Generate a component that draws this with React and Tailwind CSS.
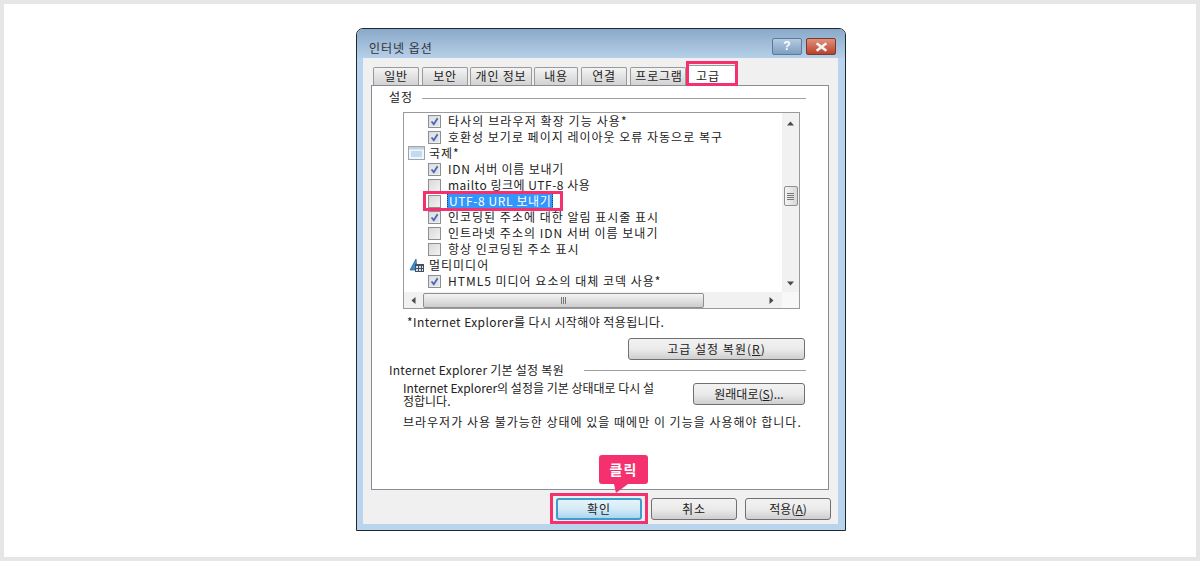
import React from "react";

const FONT = { fontFamily: '"Noto Sans CJK KR", "Liberation Sans", sans-serif' };

const TABS = [
  { label: "일반", width: "w-[46px]", gap: "mr-[3px]" },
  { label: "보안", width: "w-[46px]", gap: "mr-[2px]" },
  { label: "개인 정보", width: "w-[62px]", gap: "mr-[2px]" },
  { label: "내용", width: "w-[44px]", gap: "mr-[3px]" },
  { label: "연결", width: "w-[46px]", gap: "mr-[3px]" },
  { label: "프로그램", width: "w-[56px] pl-[2px]", gap: "" },
];

const ROWS = [
  { type: "check", checked: true, track: "tracking-[1.1px]", text: "타사의 브라우저 확장 기능 사용*" },
  { type: "check", checked: true, track: "tracking-[1px]", text: "호환성 보기로 페이지 레이아웃 오류 자동으로 복구" },
  { type: "group", icon: "window", track: "tracking-[1px]", text: "국제*" },
  { type: "check", checked: true, track: "tracking-[0.8px]", text: "IDN 서버 이름 보내기" },
  { type: "check", checked: false, track: "tracking-[0.5px]", text: "mailto 링크에 UTF-8 사용" },
  { type: "check", checked: false, selected: true, track: "tracking-[0.6px]", text: "UTF-8 URL 보내기" },
  { type: "check", checked: true, track: "tracking-[1px]", text: "인코딩된 주소에 대한 알림 표시줄 표시" },
  { type: "check", checked: false, track: "tracking-[1px]", text: "인트라넷 주소의 IDN 서버 이름 보내기" },
  { type: "check", checked: false, track: "tracking-[1px]", text: "항상 인코딩된 주소 표시" },
  { type: "group", icon: "media", track: "tracking-[1px]", text: "멀티미디어" },
  { type: "check", checked: true, track: "tracking-[1px]", text: "HTML5 미디어 요소의 대체 코덱 사용*" },
];

const Checkbox = ({ checked }) => (
  <span className="w-[13px] h-[13px] shrink-0 border border-[#8e8f8f] bg-gradient-to-br from-[#d8d8d8] to-[#f4f4f4] p-[1px]">
    {checked && (
      <svg viewBox="0 0 9 9" className="w-full h-full bg-[#dfe3ea]">
        <path d="M1.5 4.5 L3.8 7.2 L7.6 1.2" fill="none" stroke="#4a68ac" strokeWidth="1.8" />
      </svg>
    )}
  </span>
);

const GroupIcon = ({ icon }) =>
  icon === "window" ? (
    <svg viewBox="0 0 17 14" className="w-[17px] h-[14px] shrink-0">
      <rect x="0.5" y="0.5" width="16" height="13" fill="#f2f6fb" stroke="#9aa5b1" />
      <rect x="1" y="1" width="15" height="2.5" fill="#c3d0de" />
      <path d="M3 6h11M3 8h11M3 10h11" stroke="#8fc0e8" strokeWidth="1" />
    </svg>
  ) : (
    <svg viewBox="0 0 17 16" className="w-[17px] h-[16px] shrink-0">
      <path d="M2 13 L8 2 L9 13 Z" fill="#3b8fd0" stroke="#1f5f9c" strokeWidth="0.7" />
      <rect x="7" y="7" width="9" height="8" fill="#44505c" />
      <path d="M8 9h2v2H8zM11 9h2v2h-2zM14 9h1v2h-1zM8 12h2v2H8zM11 12h2v2h-2zM14 12h1v2h-1z" fill="#d6dde4" />
    </svg>
  );

const Row = ({ row }) => {
  if (row.type === "group") {
    return (
      <div className="h-[16px] flex items-center pl-[4px] gap-[4px]">
        <GroupIcon icon={row.icon} />
        <span className={`whitespace-nowrap ${row.track}`}>{row.text}</span>
      </div>
    );
  }
  return (
    <div className="h-[16px] flex items-center pl-[24px]">
      <Checkbox checked={row.checked} />
      {row.selected ? (
        <span className="relative ml-[6px]">
          <span className={`block bg-[#3297fd] text-white px-[1px] whitespace-nowrap border border-dotted border-[#1c3d66] leading-[14px] ${row.track}`}>
            {row.text}
          </span>
          <span className="absolute left-[-24px] top-[-2px] w-[140px] h-[20px] border-[3px] border-[#f5306f]" />
        </span>
      ) : (
        <span className={`ml-[7px] whitespace-nowrap ${row.track}`}>{row.text}</span>
      )}
    </div>
  );
};

const Button = ({ className = "", children }) => (
  <button className={`h-[22px] rounded-[3px] border border-[#707070] bg-gradient-to-b from-[#f2f2f2] via-[#ebebeb] to-[#cfcfcf] text-[12px] text-[#222] ${className}`}>
    {children}
  </button>
);

const Arrow = ({ d }) => (
  <svg viewBox="0 0 7 7" className="w-[7px] h-[7px]">
    <path d={d} fill="#4a4a4a" />
  </svg>
);

const VerticalScroll = () => (
  <div className="w-[17px] bg-[#f1f1f1] flex flex-col items-center">
    <div className="h-[18px] mt-[1px] flex items-center justify-center"><Arrow d="M3.5 1.5 L7 5.5 H0 Z" /></div>
    <div className="mt-[54px] w-[14px] h-[20px] rounded-[2px] border border-[#8f8f8f] bg-gradient-to-r from-[#f4f4f4] to-[#d8d8d8] flex flex-col items-center justify-center gap-[1px]">
      <span className="w-[7px] h-[1px] bg-[#777]" />
      <span className="w-[7px] h-[1px] bg-[#777]" />
      <span className="w-[7px] h-[1px] bg-[#777]" />
      <span className="w-[7px] h-[1px] bg-[#777]" />
    </div>
    <div className="mt-auto h-[18px] flex items-center justify-center"><Arrow d="M0 1.5 H7 L3.5 5.5 Z" /></div>
  </div>
);

const HorizontalScroll = () => (
  <div className="h-[16px] bg-[#f1f1f1] flex items-center">
    <div className="w-[19px] flex justify-center"><Arrow d="M1.5 3.5 L5.5 0 V7 Z" /></div>
    <div className="w-[281px] h-[15px] rounded-[2px] border border-[#8f8f8f] bg-gradient-to-b from-[#f4f4f4] to-[#cdcdcd] flex items-center justify-center gap-[1px]">
      <span className="w-[1px] h-[7px] bg-[#777]" />
      <span className="w-[1px] h-[7px] bg-[#777]" />
      <span className="w-[1px] h-[7px] bg-[#777]" />
    </div>
    <div className="flex-1 flex justify-end pr-[7px]"><Arrow d="M1.5 0 L5.5 3.5 L1.5 7 Z" /></div>
    <div className="w-[17px] h-full bg-[#f8f8f8]" />
  </div>
);

const GroupLabel = ({ children, lineClass, textClass = "" }) => (
  <div className="flex items-center">
    <span className={`whitespace-nowrap ${textClass}`}>{children}</span>
    <span className={`h-[1px] bg-[#a0a0a0] flex-1 ${lineClass}`} />
  </div>
);

export default function App() {
  return (
    <div
      className="w-[1200px] h-[561px] border-4 border-[#e6e6e6] bg-white flex justify-center pt-[24px] overflow-hidden text-[12px] text-[#222]"
      style={FONT}
    >
      {/* dialog */}
      <div className="ml-[2px] w-[490px] h-[503px] border border-[#1d2a33] rounded-t-[7px] bg-[#b9d4ec] flex flex-col pl-[6px] pr-[7px] pb-[6px]">
        {/* title bar */}
        <div className="-ml-[6px] -mr-[7px] px-[12px] h-[29px] shrink-0 rounded-t-[6px] bg-gradient-to-b from-[#8aa9c9] to-[#b6d0e8] flex items-center justify-between">
          <span className="text-[#333] mt-[8px] tracking-[1px]">인터넷 옵션</span>
          <div className="flex gap-[4px] mr-[-3px] mt-[6px]">
            <div className="w-[30px] h-[17px] rounded-[2px] border border-[#5c7a99] bg-gradient-to-b from-[#b4cbe2] to-[#7f9fc0] text-white font-bold text-[12px] leading-[15px] text-center" style={{ fontFamily: '"Liberation Sans", sans-serif' }}>?</div>
            <div className="w-[30px] h-[17px] rounded-[2px] border border-[#7a3a30] bg-gradient-to-b from-[#e0907c] to-[#b8402c] flex items-center justify-center">
              <svg viewBox="0 0 12 9" className="w-[13px] h-[10px]">
                <path d="M1.5 1 L10.5 8 M10.5 1 L1.5 8" stroke="#f4f4f4" strokeWidth="2.4" />
              </svg>
            </div>
          </div>
        </div>

        {/* content panel */}
        <div className="flex-1 bg-[#f0f0f0] pl-[8px] pr-[9px] pt-[6px] flex flex-col relative">
          {/* tabs */}
          <div className="flex items-end h-[21px] pl-[2px] relative z-10">
            {TABS.map((tab) => (
              <div
                key={tab.label}
                className={`h-[18px] pb-[1px] ${tab.width} ${tab.gap} border border-b-0 border-[#9a9a9a] rounded-t-[2px] bg-gradient-to-b from-[#f4f4f4] to-[#d2d2d2] flex items-center justify-center whitespace-nowrap tracking-[0.8px]`}
              >
                {tab.label}
              </div>
            ))}
            <div className="relative h-[21px] w-[50px] bg-white border border-b-0 border-[#9a9a9a] flex items-center justify-center mb-[-1px]">
              <span className="mr-[6px] tracking-[1px]">고급</span>
              <span className="absolute left-[-1px] top-[-5px] w-[52px] h-[25px] border-[3px] border-[#f5306f]" />
            </div>
          </div>

          {/* tab pane */}
          <div className="h-[405px] border border-[#898c95] bg-white pl-[17px] pr-[22px] pt-[2px]">
            <GroupLabel lineClass="ml-[9px] mt-[3px]" textClass="tracking-[1px]">설정</GroupLabel>
            <div className="ml-[14px] mr-[6px] mt-[6px] h-[197px] border border-[#9a9a9a] flex flex-col">
              <div className="flex h-[179px]">
                <div className="flex-1 overflow-hidden">
                  {ROWS.map((row) => (
                    <Row key={row.text} row={row} />
                  ))}
                </div>
                <VerticalScroll />
              </div>
              <HorizontalScroll />
            </div>
            <div className="ml-[18px] mt-[5px] h-[16px] leading-[16px] whitespace-nowrap tracking-[0.4px]">*Internet Explorer를 다시 시작해야 적용됩니다.</div>
            <div className="flex justify-end mt-[8px] mr-[1px]">
              <Button className="w-[177px] tracking-[1px]">고급 설정 복원(<u>R</u>)</Button>
            </div>
            <div className="mt-[1px]">
              <GroupLabel lineClass="ml-[20px]" textClass="tracking-[0.25px]">Internet Explorer 기본 설정 복원</GroupLabel>
            </div>
            <div className="flex ml-[14px] mr-[1px] mt-[3px]">
              <div className="flex-1 leading-[13px] -mt-[1px]">
                <div className="whitespace-nowrap">Internet Explorer의 설정을 기본 상태대로 다시 설</div>
                <div>정합니다.</div>
              </div>
              <Button className="w-[112px] mt-[1px]">원래대로(<u>S</u>)...</Button>
            </div>
            <div className="ml-[14px] mt-[6px] whitespace-nowrap tracking-[1px]">브라우저가 사용 불가능한 상태에 있을 때에만 이 기능을 사용해야 합니다.</div>
          </div>

          {/* footer buttons */}
          <div className="flex justify-end gap-[8px] pt-[8px] mr-[-2px]">
            <div className="relative mr-[1px]">
              <Button className="w-[86px] tracking-[1px] !border-[#3c9ed0] !border-2 !from-[#e6f3fa] !via-[#d5ebf7] !to-[#a8d6ef]">확인</Button>
              <span className="absolute left-[-6px] top-[-5px] w-[98px] h-[31px] border-[3px] border-[#f5306f]" />
              <div className="absolute left-[43px] top-[-43px] w-[49px] h-[29px] rounded-[3px] bg-[#f5306f] text-white font-bold text-[14px] tracking-[1px] flex items-center justify-center">
                클릭
              </div>
              <svg viewBox="0 0 14 9" className="absolute left-[58px] top-[-14px] w-[14px] h-[9px]">
                <path d="M0 0 H14 L2 9 Z" fill="#f5306f" />
              </svg>
            </div>
            <Button className="w-[86px] tracking-[1px]">취소</Button>
            <Button className="w-[86px]">적용(<u>A</u>)</Button>
          </div>
        </div>
      </div>
    </div>
  );
}
